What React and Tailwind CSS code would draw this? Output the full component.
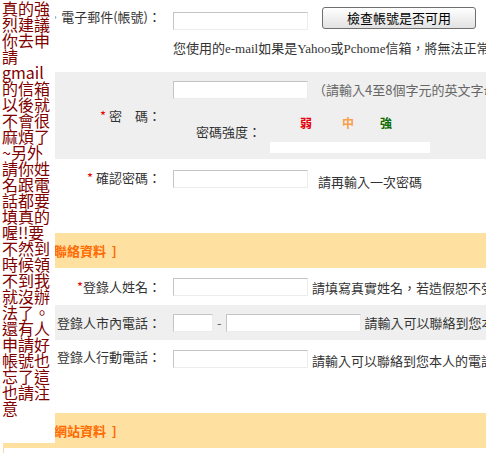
import React from 'react';

const noteLines = [
  '真的強', '烈建議', '你去申', '請', 'gmail', '的信箱', '以後就', '不會很', '麻煩了',
  '~另外', '請你姓', '名跟電', '話都要', '填真的', '喔!!要', '不然到', '時候領', '不到我',
  '就沒辦', '法了。', '還有人', '申請好', '帳號也', '忘了這', '也請注', '意',
];

const cjk = { fontFamily: '"Noto Sans CJK TC", "Liberation Sans", sans-serif' };
const serifMix = { fontFamily: '"Liberation Serif", "Noto Sans CJK TC", serif' };

function Field({ w = 'w-[135px]' }) {
  return (
    <div className={`${w} h-[18px] shrink-0 bg-white border-t border-l border-[#c4c4c4] border-r border-b border-r-[#ececec] border-b-[#ececec]`} />
  );
}

function Star() {
  return <span className="text-[#e60000]">*</span>;
}

function Label({ children, className = '' }) {
  return (
    <div className={`w-[163px] shrink-0 text-right pr-[5px] text-[13px] leading-[18px] text-[#333] whitespace-nowrap ${className}`}>
      {children}
    </div>
  );
}

function SectionHeader({ title, className = '' }) {
  return (
    <div className={`h-[35px] bg-[#fee0a0] flex items-center pl-[43px] text-[13px] font-bold text-[#ff6a00] whitespace-nowrap ${className}`}>
      [ {title}&nbsp;&nbsp;]
    </div>
  );
}

export default function App() {
  return (
    <div className="relative w-[486px] h-[453px] overflow-hidden bg-white" style={cjk}>
      <div className="w-[800px] ml-[3px]">
        {/* 電子郵件 */}
        <div className="flex h-[72px] bg-white">
          <Label className="pt-[8px]">
            <span className="text-[#9aa]">‧</span>電子郵件(帳號)：
          </Label>
          <div className="pl-[7px] text-[13px] text-[#333]">
            <div className="flex items-start">
              <div className="mt-[12px]">
                <Field />
              </div>
              <button className="ml-[14px] mt-[7px] w-[154px] h-[22px] rounded-[3px] border border-[#6f6f6f] bg-gradient-to-b from-white to-[#e2e2e2] text-[13px] leading-[18px] text-black">
                檢查帳號是否可用
              </button>
            </div>
            <div className="mt-[10px] leading-[18px] whitespace-nowrap" style={serifMix}>
              您使用的e-mail如果是Yahoo或Pchome信箱，將無法正常收到認證信
            </div>
          </div>
        </div>

        {/* 密碼 */}
        <div className="flex h-[87px] bg-[#efefef]">
          <Label className="self-center">
            <Star /> 密　碼：
          </Label>
          <div className="pl-[7px] pt-[9px]">
            <div className="flex items-center">
              <Field />
              <span className="ml-[5px] text-[13px] leading-[18px] text-[#666] whitespace-nowrap">
                （請輸入4至8個字元的英文字母或數字）
              </span>
            </div>
            <div className="flex items-center mt-[14px] pl-[23px]">
              <div className="w-[74px] text-[13px] leading-[18px] text-[#333] pb-[3px]">密碼強度：</div>
              <div>
                <div className="flex h-[20px] items-center text-[12px] font-bold leading-[20px]">
                  <span className="ml-[30px] text-[#e8000b]">弱</span>
                  <span className="ml-[30px] text-[#f7a04a]">中</span>
                  <span className="ml-[26px] text-[#0a6b00]">強</span>
                </div>
                <div className="mt-[9px] w-[160px] h-[11px] bg-white" />
              </div>
            </div>
          </div>
        </div>

        {/* 確認密碼 */}
        <div className="flex h-[74px] bg-white">
          <Label className="pt-[10px]">
            <Star /> 確認密碼：
          </Label>
          <div className="pl-[7px] pt-[11px] flex items-start">
            <Field />
            <span className="ml-[10px] mt-[3px] text-[13px] leading-[18px] text-[#333] whitespace-nowrap">
              請再輸入一次密碼
            </span>
          </div>
        </div>

        <SectionHeader title="聯絡資料" />

        {/* 姓名 */}
        <div className="flex h-[37px] items-center bg-white">
          <Label>
            <Star />登錄人姓名：
          </Label>
          <div className="pl-[7px] flex items-center">
            <Field />
            <span className="ml-[4px] mt-[2px] text-[13px] leading-[18px] text-[#333] whitespace-nowrap">
              請填寫真實姓名，若造假恕不受理
            </span>
          </div>
        </div>

        {/* 市內電話 */}
        <div className="flex h-[35px] items-center bg-[#efefef]">
          <Label>登錄人市內電話：</Label>
          <div className="pl-[7px] flex items-center">
            <Field w="w-[40px]" />
            <span className="mx-[4px] text-[13px] leading-[18px] text-[#666]">-</span>
            <Field />
            <span className="ml-[4px] text-[13px] leading-[18px] text-[#333] whitespace-nowrap">
              請輸入可以聯絡到您本人的電話
            </span>
          </div>
        </div>

        {/* 行動電話 */}
        <div className="flex h-[73px] bg-white">
          <Label className="pt-[8px]">登錄人行動電話：</Label>
          <div className="pl-[7px] pt-[10px] flex items-start">
            <Field />
            <span className="ml-[4px] mt-[2px] text-[13px] leading-[18px] text-[#333] whitespace-nowrap">
              請輸入可以聯絡到您本人的電話號碼
            </span>
          </div>
        </div>

        <SectionHeader title="網站資料" className="h-[34px]" />

        <div className="h-[20px] bg-white border-l border-[#f3d9a4]" />
      </div>

      {/* floating note */}
      <div className="absolute left-0 top-0 w-[55px] h-[443px] bg-white pl-[2px] text-[16px] leading-[16px] text-[#800000]">
        {noteLines.map((line, i) => (
          <div key={i} className="whitespace-nowrap">{line}</div>
        ))}
      </div>
    </div>
  );
}
